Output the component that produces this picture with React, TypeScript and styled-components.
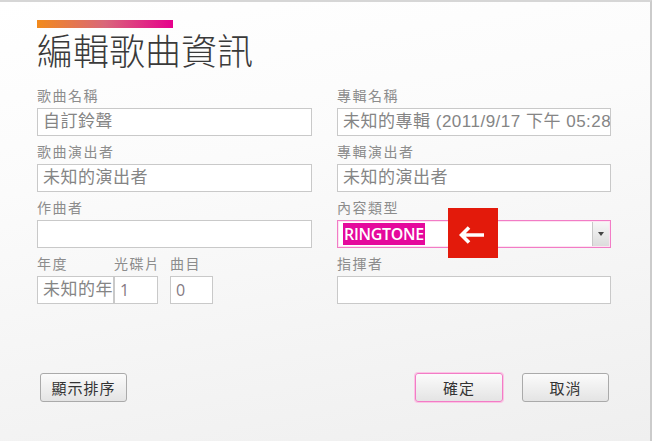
import React from "react";
import styled, { createGlobalStyle } from "styled-components";

const Global = createGlobalStyle`
  html, body { margin: 0; padding: 0; }
  body { font-family: "Noto Sans CJK TC", "Noto Sans", sans-serif; }
`;

const Window = styled.div`
  width: 652px;
  height: 441px;
  box-sizing: border-box;
  position: relative;
  overflow: hidden;
  background: linear-gradient(170deg, #ffffff 0%, #fbfbfb 35%, #efefef 100%);
  border-top: 2px solid #d6d6d6;
  border-right: 2px solid #cbcbcb;
  display: flex;
  flex-direction: column;
`;

const Header = styled.div`
  padding: 18px 0 0 37px;
  display: flex;
  flex-direction: column;
`;

const AccentBar = styled.div`
  width: 136px;
  height: 8px;
  background: linear-gradient(90deg, #f28a1c 0%, #d9667a 50%, #e6008c 100%);
`;

const Title = styled.h1`
  margin: 1px 0 0 0;
  font-size: 36px;
  line-height: 40px;
  font-weight: 300;
  color: #3a3a3a;
  font-family: "Noto Sans CJK TC", sans-serif;
`;

const Form = styled.div`
  margin-top: 17px;
  padding-left: 37px;
  display: grid;
  grid-template-columns: 275px 274px;
  column-gap: 25px;
  row-gap: 6px;
`;

const Field = styled.div`
  display: flex;
  flex-direction: column;
  position: relative;
`;

const Label = styled.div`
  height: 18px;
  line-height: 18px;
  margin-bottom: 4px;
  font-size: 14px;
  letter-spacing: 1.5px;
  color: #8c8c8c;
  white-space: nowrap;
`;

const TextBox = styled.div`
  box-sizing: border-box;
  width: 100%;
  height: 28px;
  border: 1px solid #c9c9c9;
  background: #fff;
  padding: 0 0 0 5px;
  font-size: 17px;
  line-height: 26px;
  letter-spacing: 0.5px;
  color: #858585;
  white-space: nowrap;
  overflow: hidden;
  font-family: "Liberation Sans", "Noto Sans CJK TC", sans-serif;
`;

const NumBox = styled(TextBox)`
  font-family: "Open Sans", "Noto Sans", sans-serif;
  font-size: 16px;
  color: #857a83;
`;

const SmallRow = styled.div`
  display: flex;
  align-items: flex-end;
`;

const SmallField = styled.div<{ $w: number; $ml?: number }>`
  display: flex;
  flex-direction: column;
  width: ${(p) => p.$w}px;
  margin-left: ${(p) => p.$ml ?? 0}px;
  flex: none;
`;

const Combo = styled.div`
  box-sizing: border-box;
  height: 28px;
  border: 1px solid #f27cc6;
  background: #fff;
  display: flex;
  padding: 1px;
  box-shadow: inset 0 0 0 1px #fde3f1;
`;

const ComboText = styled.div`
  flex: 1;
  display: flex;
  align-items: center;
  padding-left: 4px;
`;

const Selected = styled.span`
  background: #e5089c;
  color: #fff;
  font-family: "Open Sans", "Noto Sans", sans-serif;
  font-weight: 600;
  font-size: 16px;
  line-height: 22px;
  padding: 0 1px;
  letter-spacing: -0.3px;
`;

const DropBtn = styled.div`
  width: 16px;
  border-left: 1px solid #c8c8c8;
  background: linear-gradient(#f7f7f7, #dcdcdc);
  display: flex;
  align-items: center;
  justify-content: center;
`;

const Tri = styled.div`
  width: 0;
  height: 0;
  border-left: 3.5px solid transparent;
  border-right: 3.5px solid transparent;
  border-top: 4px solid #444;
`;

const ArrowBadge = styled.div`
  position: absolute;
  left: 111px;
  top: 10px;
  width: 50px;
  height: 50px;
  background: #e31a0b;
  display: flex;
  align-items: center;
  justify-content: center;
  padding: 4px 3px 0 0;
  box-sizing: border-box;
`;

const Footer = styled.div`
  margin-top: auto;
  padding: 0 41px 39px 40px;
  display: flex;
  align-items: center;
  justify-content: space-between;
`;

const ButtonGroup = styled.div`
  display: flex;
  gap: 19px;
`;

const Button = styled.button<{ $primary?: boolean }>`
  box-sizing: border-box;
  width: ${(p) => (p.$primary ? 88 : 87)}px;
  height: 29px;
  border-radius: 3px;
  border: 1px solid ${(p) => (p.$primary ? "#f27cc6" : "#aaaaaa")};
  box-shadow: ${(p) => (p.$primary ? "0 0 0 1px #fbc4e4" : "none")};
  background: linear-gradient(#fbfbfb, #e4e4e4);
  font-family: "Noto Sans CJK TC", sans-serif;
  font-size: 15px;
  letter-spacing: 1px;
  color: #333;
  padding: 0;
  line-height: 27px;
`;

export default function App() {
  return (
    <>
      <Global />
      <Window>
        <Header>
          <AccentBar />
          <Title>編輯歌曲資訊</Title>
        </Header>
        <Form>
          <Field>
            <Label>歌曲名稱</Label>
            <TextBox>自訂鈴聲</TextBox>
          </Field>
          <Field>
            <Label>專輯名稱</Label>
            <TextBox>未知的專輯 (2011/9/17 下午 05:28</TextBox>
          </Field>
          <Field>
            <Label>歌曲演出者</Label>
            <TextBox>未知的演出者</TextBox>
          </Field>
          <Field>
            <Label>專輯演出者</Label>
            <TextBox>未知的演出者</TextBox>
          </Field>
          <Field>
            <Label>作曲者</Label>
            <TextBox />
          </Field>
          <Field>
            <Label>內容類型</Label>
            <Combo>
              <ComboText>
                <Selected>RINGTONE</Selected>
              </ComboText>
              <DropBtn>
                <Tri />
              </DropBtn>
            </Combo>
            <ArrowBadge>
              <svg width="25" height="18" viewBox="0 0 25 18">
                <path
                  d="M10 1.5 L2.5 9 L10 16.5 M3 9 L25 9"
                  fill="none"
                  stroke="#fff"
                  strokeWidth="3.6"
                  strokeLinecap="butt"
                  strokeLinejoin="miter"
                />
              </svg>
            </ArrowBadge>
          </Field>
          <SmallRow>
            <SmallField $w={77}>
              <Label>年度</Label>
              <TextBox>未知的年</TextBox>
            </SmallField>
            <SmallField $w={44}>
              <Label>光碟片</Label>
              <NumBox>1</NumBox>
            </SmallField>
            <SmallField $w={43} $ml={12}>
              <Label>曲目</Label>
              <NumBox>0</NumBox>
            </SmallField>
          </SmallRow>
          <Field>
            <Label>指揮者</Label>
            <TextBox />
          </Field>
        </Form>
        <Footer>
          <Button>顯示排序</Button>
          <ButtonGroup>
            <Button $primary>確定</Button>
            <Button>取消</Button>
          </ButtonGroup>
        </Footer>
      </Window>
    </>
  );
}
